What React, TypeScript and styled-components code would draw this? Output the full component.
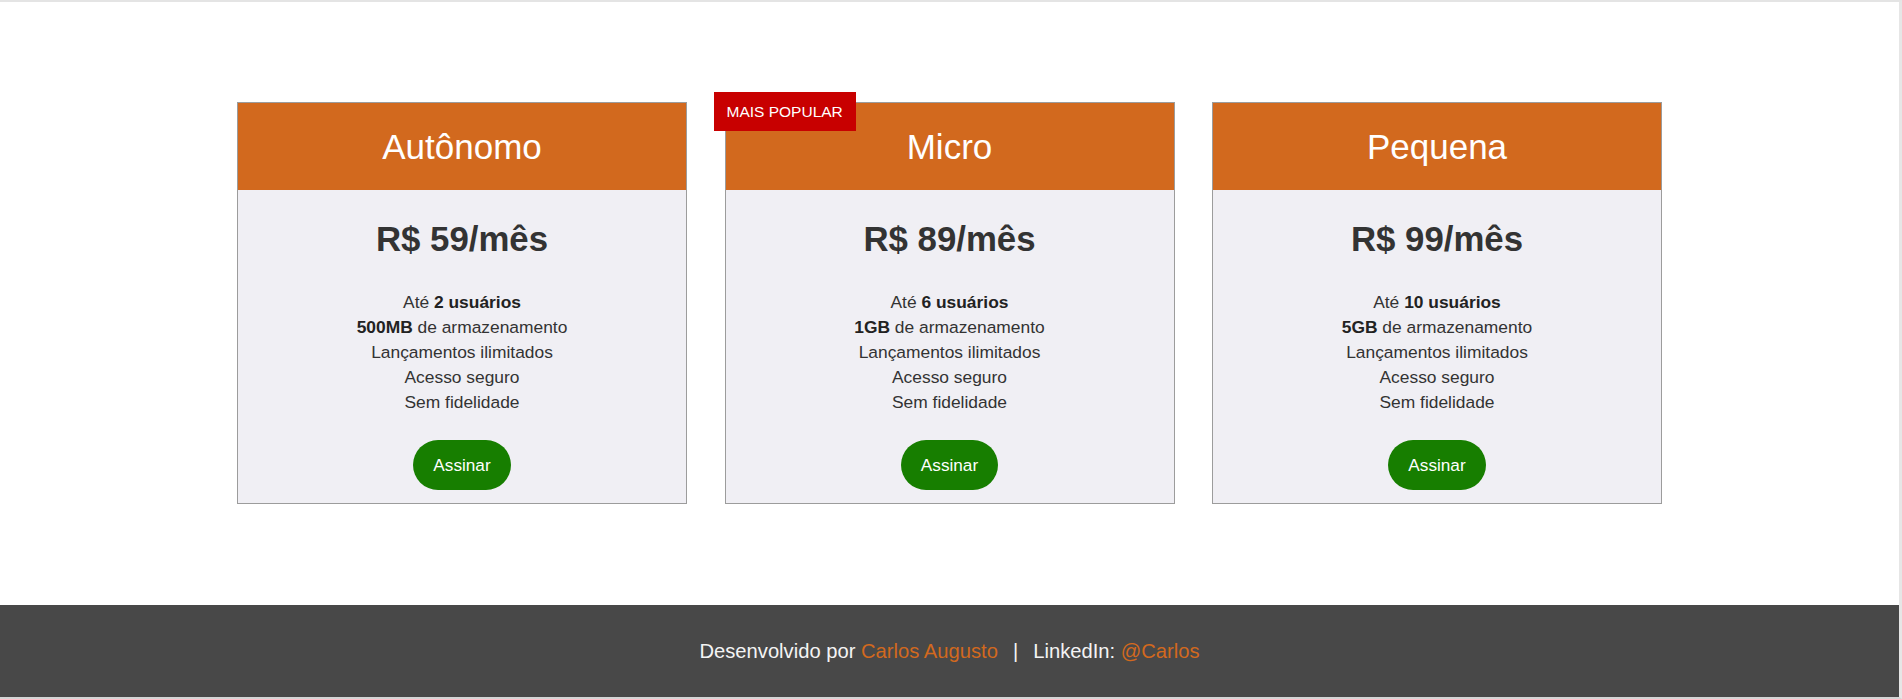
import React from "react";
import styled, { createGlobalStyle } from "styled-components";

const GlobalStyle = createGlobalStyle`
  html, body {
    margin: 0;
    padding: 0;
    background: #ffffff;
  }
  body {
    font-family: "Liberation Sans", Arial, sans-serif;
    color: #333333;
  }
  * { box-sizing: border-box; }
`;

const Page = styled.div`
  width: 1902px;
  height: 699px;
  display: flex;
  flex-direction: column;
  border-top: 2px solid #e4e4e4;
  border-right: 3px solid #e6e6e6;
  border-bottom: 2px solid #d5d5d5;
  overflow: hidden;
`;

const Main = styled.main`
  flex: 1;
  display: flex;
  justify-content: center;
  align-items: flex-start;
  gap: 37.5px;
  padding: 100px 0;
`;

const Card = styled.section`
  position: relative;
  width: 450px;
  background: #f0eff4;
  border: 1px solid #9c9c9c;
  display: flex;
  flex-direction: column;
  align-items: center;
`;

const Badge = styled.span`
  position: absolute;
  left: -12px;
  top: -11px;
  height: 39px;
  padding: 0 13px;
  display: flex;
  align-items: center;
  background: #c80000;
  color: #ffffff;
  font-size: 15.5px;
  line-height: 1;
`;

const Header = styled.header`
  align-self: stretch;
  height: 87px;
  background: #d2691e;
  display: flex;
  align-items: center;
  justify-content: center;
`;

const Title = styled.h2`
  margin: 0;
  font-size: 35px;
  font-weight: normal;
  color: #ffffff;
  line-height: 1;
`;

const Price = styled.p`
  margin: 29px 0 0;
  font-size: 34.8px;
  font-weight: bold;
  line-height: 40px;
  color: #333333;
`;

const Features = styled.ul`
  list-style: none;
  margin: 31px 0 0;
  padding: 0;
  text-align: center;
  font-size: 17.4px;
  line-height: 25px;
  color: #333333;

  strong {
    font-weight: bold;
    color: #222222;
  }
`;

const Button = styled.button`
  margin: 25px 0 13px;
  height: 50px;
  padding: 0 20px;
  border: none;
  border-radius: 25px;
  background: #177e00;
  color: #ffffff;
  font-family: "Liberation Sans", Arial, sans-serif;
  font-size: 17.2px;
  cursor: pointer;
`;

const Footer = styled.footer`
  height: 92px;
  background: #484848;
  color: #f4f4f4;
  display: flex;
  align-items: center;
  justify-content: center;
  font-size: 20.2px;
`;

const Link = styled.a`
  color: #d2691e;
  text-decoration: none;
`;

const Sep = styled.span`
  margin: 0 15px;
`;

type Plan = {
  name: string;
  price: string;
  users: string;
  storage: string;
  popular?: boolean;
};

const plans: Plan[] = [
  { name: "Autônomo", price: "R$ 59/mês", users: "2 usuários", storage: "500MB" },
  { name: "Micro", price: "R$ 89/mês", users: "6 usuários", storage: "1GB", popular: true },
  { name: "Pequena", price: "R$ 99/mês", users: "10 usuários", storage: "5GB" },
];

export default function App() {
  return (
    <>
      <GlobalStyle />
      <Page>
        <Main>
          {plans.map((p) => (
            <Card key={p.name}>
              {p.popular && <Badge>MAIS POPULAR</Badge>}
              <Header>
                <Title>{p.name}</Title>
              </Header>
              <Price>{p.price}</Price>
              <Features>
                <li>
                  Até <strong>{p.users}</strong>
                </li>
                <li>
                  <strong>{p.storage}</strong> de armazenamento
                </li>
                <li>Lançamentos ilimitados</li>
                <li>Acesso seguro</li>
                <li>Sem fidelidade</li>
              </Features>
              <Button>Assinar</Button>
            </Card>
          ))}
        </Main>
        <Footer>
          <span>
            Desenvolvido por <Link href="#">Carlos Augusto</Link>
          </span>
          <Sep>|</Sep>
          <span>
            LinkedIn: <Link href="#">@Carlos</Link>
          </span>
        </Footer>
      </Page>
    </>
  );
}
